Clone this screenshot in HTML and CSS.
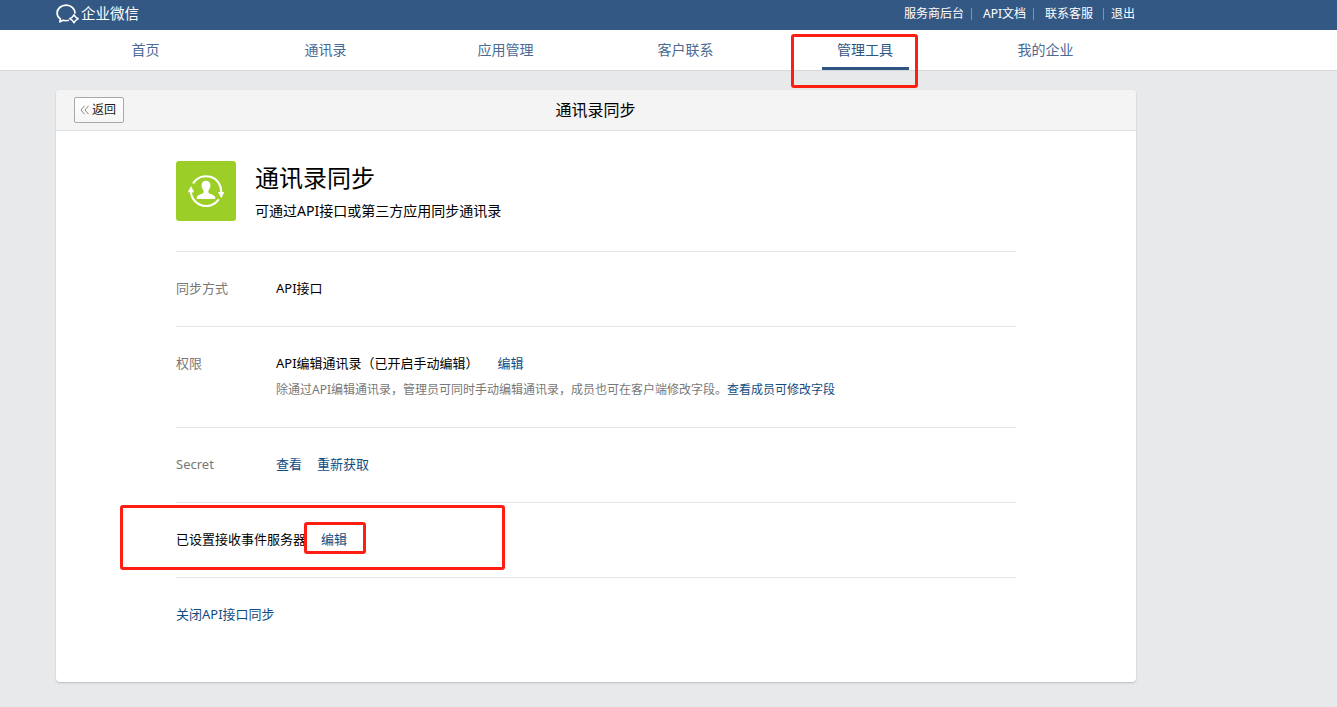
FILE: index.html
```html
<!DOCTYPE html>
<html lang="zh-CN">
<head>
    <meta charset="UTF-8">
    <title>企业微信 - 通讯录同步</title>
    <link rel="stylesheet" href="styles.css">
</head>
<body>
<header class="topbar">
    <div class="wrap topbar-inner">
        <a class="logo">
            <svg class="logo-icon" width="24" height="21" viewBox="0 0 24 21" fill="none" stroke="#fff" stroke-width="1.7">
                <path d="M18.9 9.6C19.2 4.800 15.200 1.200 10.100 1.200C5 1.200 1.100 4.700 1.100 9c0 2.500 1.300 4.600 3.300 6L3.900 17.800l3.200-1.500c2 .6 4 .6 5.900 0" stroke-linejoin="round"/>
                <path d="M18 10.800l1.700 2.300 2.500 1.500-2.500 1.700L18 18.800l-1.700-2.500-2.500-1.700 2.500-1.500z" stroke-width="1.500" stroke-linejoin="round"/>
            </svg>
            <span>企业微信</span>
        </a>
        <div class="top-links">
            <a>服务商后台</a>
            <i></i>
            <a>API文档</a>
            <i></i>
            <a>联系客服</a>
            <i></i>
            <a>退出</a>
        </div>
    </div>
</header>
<nav class="nav">
    <div class="wrap nav-inner">
        <a class="nav-item">首页</a>
        <a class="nav-item">通讯录</a>
        <a class="nav-item">应用管理</a>
        <a class="nav-item">客户联系</a>
        <a class="nav-item active"><span>管理工具</span><b class="mark mark-nav"></b></a>
        <a class="nav-item">我的企业</a>
    </div>
</nav>
<main class="wrap card">
    <div class="card-head">
        <a class="back">
            <svg width="10" height="10" viewBox="0 0 10 10" fill="none" stroke="#888"><path d="M4.500.8L1 5l3.500 4.200M8.500.8L5 5l3.500 4.200"/></svg>
            <span>返回</span>
        </a>
        <h2>通讯录同步</h2>
    </div>
    <div class="content">
        <div class="intro">
            <svg class="app-icon" width="60" height="60" viewBox="0 0 60 60">
                <rect width="60" height="60" rx="3" fill="#9bcf28"/>
                <g fill="none" stroke="#fff" stroke-width="2">
                    <path d="M17 22.500A15.200 15.200 0 0 1 45.200 31"/>
                    <path d="M42.800 38.200A15.200 15.200 0 0 1 14.900 29"/>
                </g>
                <path d="M15 25l3.200 6.200h-6.400zM45.200 37.200L42 31h6.400z" fill="#fff"/>
                <path d="M30 19.800c-2.800 0-4.400 2-4.400 4.700 0 2.100.9 3.700 2 4.900v2.200c-.6 1.400-6 2-6.800 4.700V38h18.400v-1.700c-.8-2.700-6.200-3.300-6.800-4.700v-2.200c1.100-1.200 2-2.800 2-4.900 0-2.700-1.600-4.700-4.400-4.700z" fill="#fff"/>
            </svg>
            <div>
                <h1>通讯录同步</h1>
                <p>可通过API接口或第三方应用同步通讯录</p>
            </div>
        </div>
        <div class="row">
            <div class="label">同步方式</div>
            <div>API接口</div>
        </div>
        <div class="row">
            <div class="label">权限</div>
            <div>
                <div class="links perm"><span>API编辑通讯录（已开启手动编辑）</span><a>编辑</a></div>
                <p class="tip">除通过API编辑通讯录，管理员可同时手动编辑通讯录，成员也可在客户端修改字段。<a>查看成员可修改字段</a></p>
            </div>
        </div>
        <div class="row">
            <div class="label">Secret</div>
            <div class="links"><a>查看</a><a>重新获取</a></div>
        </div>
        <div class="row server">
            <b class="mark mark-row"></b>
            <div class="links"><span>已设置接收事件服务器</span><a>编辑<b class="mark mark-edit"></b></a></div>
        </div>
        <div class="row">
            <a>关闭API接口同步</a>
        </div>
    </div>
</main>
</body>
</html>
```
FILE: styles.css
```css
* {
    box-sizing: border-box;
}
body {
    margin: 0;
    height: 707px;
    overflow: hidden;
    background: #e7e9eb;
    color: #000;
    font: 13px/24px "Noto Sans", "Noto Sans CJK SC", sans-serif;
}
h1, h2, p {
    margin: 0;
    font-weight: normal;
}
a {
    color: #0f4c81;
}
.wrap {
    width: 1080px;
    margin-left: 56px;
}

/* top bar */
.topbar {
    height: 30px;
    background: #335883;
}
.topbar-inner {
    display: flex;
    justify-content: space-between;
    height: 30px;
}
.logo {
    display: flex;
    color: #fff;
    font-size: 14.5px;
    line-height: 27px;
}
.logo-icon {
    margin: 4px 1px 0 0;
}
.top-links {
    display: flex;
    align-items: center;
    padding-right: 1px;
    font-size: 12px;
    line-height: 28px;
    height: 28px;
}
.top-links a {
    color: #fff;
}
.top-links i {
    width: 1px;
    height: 12px;
    margin: 0 11px 0 7px;
    background: #7d93b0;
}
.top-links i:last-of-type {
    margin: 0 7px 0 10px;
}

/* navigation */
.nav {
    height: 41px;
    background: #fff;
    border-bottom: 1px solid #d6d8da;
}
.nav-inner {
    display: flex;
}
.nav-item {
    position: relative;
    display: flex;
    justify-content: center;
    width: 180px;
    height: 40px;
    padding-right: 1px;
    font-size: 14px;
    line-height: 40px;
    color: #4a6a94;
}
.nav-item.active {
    padding-right: 2px;
    color: #2f5582;
}
.nav-item.active span {
    width: 87px;
    text-align: center;
    border-bottom: 3px solid #2f5582;
}

/* card */
.card {
    margin-top: 19px;
    height: 592px;
    background: #fff;
    border-radius: 4px;
    box-shadow: 0 1px 2px rgba(0, 0, 0, .2);
}
.card-head {
    display: grid;
    grid-template-columns: 1fr auto 1fr;
    align-items: center;
    height: 41px;
    padding: 0 18px;
    background: #f4f4f4;
    border-bottom: 1px solid #dce0e4;
    border-radius: 4px 4px 0 0;
}
.card-head h2 {
    font-size: 16px;
    text-indent: -1px;
}
.back {
    display: flex;
    align-items: center;
    gap: 2px;
    width: 50px;
    height: 26px;
    padding-left: 5px;
    border: 1px solid #a9a9a9;
    border-radius: 2px;
    background: linear-gradient(#fff, #f6f6f6);
    color: #222;
    font-size: 12px;
}
.content {
    width: 840px;
    margin: 0 auto;
}
.intro {
    display: flex;
    gap: 19px;
    height: 121px;
    padding-top: 30px;
    border-bottom: 1px solid #e4e5e6;
}
.intro h1 {
    font-size: 24px;
    line-height: 34px;
}
.intro p {
    font-size: 14px;
    line-height: 32px;
}
.row {
    display: flex;
    padding: 24px 0 26px;
    border-bottom: 1px solid #e4e5e6;
}
.row:last-child {
    border-bottom: 0;
}
.label {
    width: 100px;
    color: #787878;
}
.links {
    display: flex;
    gap: 15px;
}
.perm {
    gap: 19px;
}
.tip {
    margin: 3px 0 -1px;
    font-size: 12px;
    color: #787878;
}
.server {
    position: relative;
}
.server a {
    position: relative;
}

/* red highlight frames */
.mark {
    position: absolute;
    border: 3px solid #ff1e12;
    border-radius: 3px;
}
.mark-nav {
    left: 15px;
    top: 4px;
    width: 127px;
    height: 54px;
}
.mark-row {
    left: -56px;
    top: 2px;
    width: 385px;
    height: 65px;
}
.mark-edit {
    left: -17px;
    top: -5px;
    width: 62px;
    height: 32px;
}
```
